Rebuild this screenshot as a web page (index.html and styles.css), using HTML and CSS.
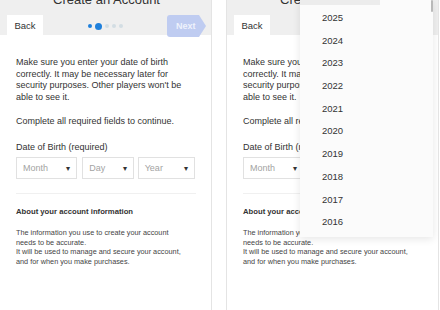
FILE: index.html
```html
<!DOCTYPE html>
<html lang="en">
<head>
  <meta charset="UTF-8" />
  <title>Create an Account</title>
  <link rel="stylesheet" href="styles.css">
</head>
<body>
  <div class="screens">

    <!-- step 2: date of birth -->
    <div class="phone">
      <div class="header">
        <h1 class="title">Create an Account</h1>
        <div class="nav-row">
          <div class="back-btn">Back</div>
          <div class="dots">
            <span class="dot done"></span><span class="dot current"></span><span class="dot"></span><span class="dot"></span><span class="dot"></span>
          </div>
          <div class="next-btn">Next</div>
        </div>
      </div>

      <div class="content">
        <p class="intro">Make sure you enter your date of birth correctly. It may be necessary later for security purposes. Other players won't be able to see it.</p>
        <p class="note">Complete all required fields to continue.</p>
        <p class="field-label">Date of Birth (required)</p>
        <div class="selects">
          <div class="select month">Month<span class="caret">▾</span></div>
          <div class="select day">Day<span class="caret">▾</span></div>
          <div class="select year">Year<span class="caret">▾</span></div>
        </div>
        <hr class="divider">
        <h2 class="about-title">About your account information</h2>
        <p class="about-text">The information you use to create your account needs to be accurate.<br>It will be used to manage and secure your account, and for when you make purchases.</p>
      </div>
    </div>

    <!-- same step, year picker open -->
    <div class="phone">
      <div class="header">
        <h1 class="title">Create an Account</h1>
        <div class="nav-row">
          <div class="back-btn">Back</div>
          <div class="dots">
            <span class="dot done"></span><span class="dot current"></span><span class="dot"></span><span class="dot"></span><span class="dot"></span>
          </div>
          <div class="next-btn">Next</div>
        </div>
      </div>

      <div class="content">
        <p class="intro">Make sure you enter your date of birth correctly. It may be necessary later for security purposes. Other players won't be able to see it.</p>
        <p class="note">Complete all required fields to continue.</p>
        <p class="field-label">Date of Birth (required)</p>
        <div class="selects">
          <div class="select month">Month<span class="caret">▾</span></div>
          <div class="select day">Day<span class="caret">▾</span></div>
          <div class="select year">Year<span class="caret">▾</span></div>
        </div>
        <hr class="divider">
        <h2 class="about-title">About your account information</h2>
        <p class="about-text">The information you use to create your account needs to be accurate.<br>It will be used to manage and secure your account, and for when you make purchases.</p>
      </div>

      <div class="year-picker">
        <div class="picker-top"></div>
        <div class="scroll-thumb"></div>
        <ul class="year-list">
          <li>2025</li>
          <li>2024</li>
          <li>2023</li>
          <li>2022</li>
          <li>2021</li>
          <li>2020</li>
          <li>2019</li>
          <li>2018</li>
          <li>2017</li>
          <li>2016</li>
        </ul>
      </div>
    </div>

  </div>
</body>
</html>
```

FILE: styles.css
```css
* {
  margin: 0;
  padding: 0;
  box-sizing: border-box;
}

html, body {
  width: 440px;
  height: 310px;
  overflow: hidden;
  background: #fff;
  font-family: 'Liberation Sans', Arial, sans-serif;
  color: #333;
}

.screens {
  display: flex;
  gap: 14px;
  margin-left: -1px;
  height: 310px;
}

.phone {
  position: relative;
  width: 213px;
  height: 310px;
  border-left: 1px solid #e4e4e4;
  border-right: 1px solid #e4e4e4;
  overflow: hidden;
  flex-shrink: 0;
}

.header {
  height: 42px;
  background: #efefef;
  padding: 0 5px 0 7px;
}

.title {
  font-size: 13px;
  font-weight: 400;
  line-height: 13px;
  text-align: center;
  margin-top: -7px;
  color: #333;
}

.nav-row {
  display: flex;
  justify-content: space-between;
  align-items: center;
  margin-top: 9px;
  height: 22px;
}

.back-btn {
  width: 36px;
  height: 22px;
  background: #fff;
  font-size: 9.5px;
  line-height: 22px;
  text-align: center;
  color: #333;
}

.dots {
  display: flex;
  align-items: center;
  gap: 3px;
}

.dot {
  width: 4px;
  height: 4px;
  border-radius: 50%;
  background: #d3dde3;
}

.dot.done {
  background: #1f80dc;
}

.dot.current {
  width: 7px;
  height: 7px;
  background: #1f80dc;
}

.next-btn {
  width: 39px;
  height: 22px;
  background: #bfccf1;
  color: #eef2fc;
  font-size: 9px;
  font-weight: 700;
  line-height: 22px;
  padding-left: 9px;
  border-radius: 3px 0 0 3px;
  clip-path: polygon(0 0, 82% 0, 100% 50%, 82% 100%, 0 100%);
}

.content {
  padding: 22px 16px 0 16px;
}

.intro {
  font-size: 9px;
  line-height: 11.5px;
  width: 172px;
}

.note {
  font-size: 9px;
  line-height: 11.5px;
  margin-top: 12.5px;
}

.field-label {
  font-size: 9px;
  line-height: 11.5px;
  margin-top: 14.5px;
}

.selects {
  display: flex;
  margin-top: 4px;
  gap: 4px;
}

.select {
  display: flex;
  justify-content: space-between;
  align-items: center;
  height: 22px;
  padding: 0 6px;
  border: 1px solid #e1e1e1;
  font-size: 9px;
  color: #a3a3a3;
}

.select.month { width: 62px; margin-right: 1px; }
.select.day { width: 52px; }
.select.year { width: 58px; }

.caret {
  color: #333;
  font-size: 8px;
}

.divider {
  border: none;
  border-top: 1px solid #f0f0f0;
  margin-top: 14px;
  width: 180px;
}

.about-title {
  font-size: 7.7px;
  font-weight: 700;
  line-height: 10px;
  margin-top: 13px;
}

.about-text {
  font-size: 7.3px;
  line-height: 9.7px;
  margin-top: 11px;
  width: 172px;
  color: #444;
}

/* open year dropdown */
.year-picker {
  position: absolute;
  top: 0;
  left: 73px;
  width: 133px;
  height: 237px;
  background: #fbfbfb;
  box-shadow: 0 2px 8px rgba(0, 0, 0, 0.1);
}

.picker-top {
  position: absolute;
  top: 0;
  left: 0;
  width: 80px;
  height: 5px;
  background: #ececec;
}

.scroll-thumb {
  position: absolute;
  top: 0;
  right: 0;
  width: 2px;
  height: 12px;
  background: #b9b9b9;
  border-radius: 1px;
}

.year-list {
  list-style: none;
  padding-top: 7px;
}

.year-list li {
  height: 22.7px;
  line-height: 22.7px;
  padding-left: 22px;
  font-size: 9.5px;
  color: #333;
}
```
